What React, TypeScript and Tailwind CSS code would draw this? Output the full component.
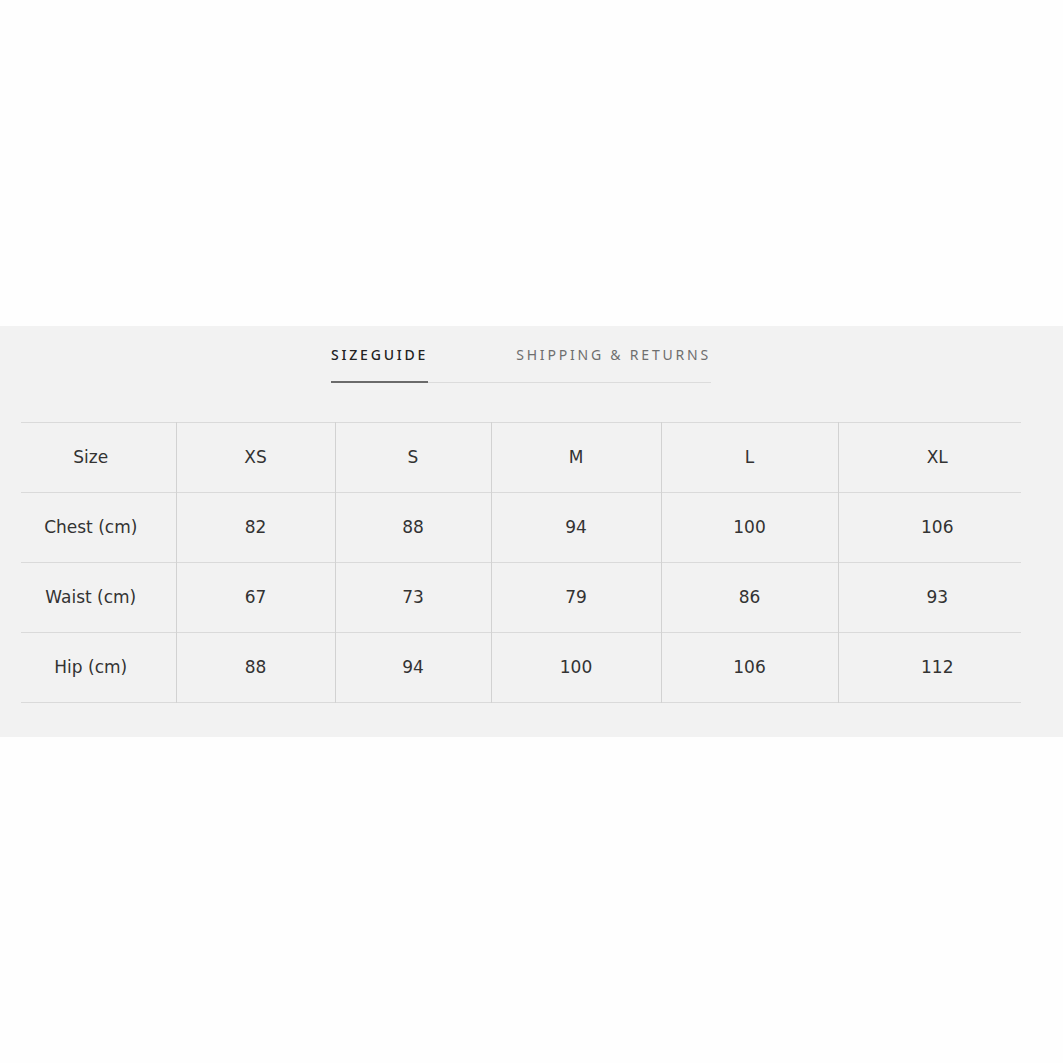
const headers = ['Size', 'XS', 'S', 'M', 'L', 'XL'];

const rows = [
  ['Chest (cm)', '82', '88', '94', '100', '106'],
  ['Waist (cm)', '67', '73', '79', '86', '93'],
  ['Hip (cm)', '88', '94', '100', '106', '112'],
];

const colWidths = ['w-[155px]', 'w-[159px]', 'w-[156px]', 'w-[170px]', 'w-[177px]', 'w-[183px]'];

function Row({ cells }: { cells: string[] }) {
  return (
    <tr className="border-b border-[#dadada]">
      {cells.map((cell, i) => (
        <td
          key={i}
          className={`${colWidths[i]} h-[70px] p-0 text-center align-middle ${i > 0 ? 'border-l border-[#d2d2d2]' : 'pr-[15px]'} ${i === 5 ? 'pl-[15px]' : ''}`}
        >
          {cell}
        </td>
      ))}
    </tr>
  );
}

export default function App() {
  return (
    <div className="min-h-[1063px] bg-[#fefefe]">
      <div className="h-[326px]" />
      <section className="bg-[#f2f2f2] px-[21px] pt-[19px] pb-[34px]">
        <div className="w-[1000px]">
          <div className="flex justify-center">
            <div
              className="flex gap-[88px] border-b border-[#dcdcdc] text-[14px] tracking-[0.2em] leading-5"
              style={{ fontFamily: '"Noto Sans", "Open Sans", sans-serif' }}
            >
              <button className="-mb-px border-b-2 border-[#6b6b6b] pb-[16px] text-[#222] font-medium">SIZEGUIDE</button>
              <button className="pb-[17px] text-[#6e6e6e]">SHIPPING &amp; RETURNS</button>
            </div>
          </div>
          <table
            className="mt-[39px] w-[1000px] table-fixed border-collapse border-t border-[#dadada] text-[17px] text-[#333]"
            style={{ fontFamily: '"DejaVu Sans", "Open Sans", sans-serif' }}
          >
            <tbody>
              <Row cells={headers} />
              {rows.map((r) => (
                <Row key={r[0]} cells={r} />
              ))}
            </tbody>
          </table>
        </div>
      </section>
    </div>
  );
}
